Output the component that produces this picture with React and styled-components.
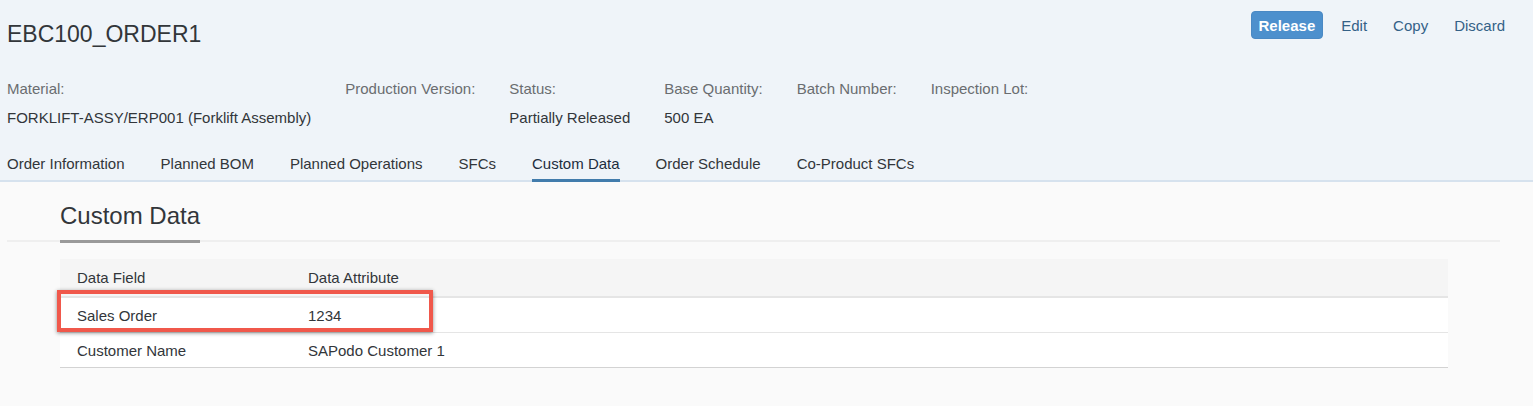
import React from "react";
import styled, { createGlobalStyle } from "styled-components";

const GlobalStyle = createGlobalStyle`
  body {
    margin: 0;
    background: #fafafa;
    font-family: "Liberation Sans", Arial, sans-serif;
    color: #32363a;
  }
`;

const attributes = [
  { label: "Material:", value: "FORKLIFT-ASSY/ERP001 (Forklift Assembly)" },
  { label: "Production Version:", value: "" },
  { label: "Status:", value: "Partially Released" },
  { label: "Base Quantity:", value: "500 EA" },
  { label: "Batch Number:", value: "" },
  { label: "Inspection Lot:", value: "" },
];

const tabs = [
  "Order Information",
  "Planned BOM",
  "Planned Operations",
  "SFCs",
  "Custom Data",
  "Order Schedule",
  "Co-Product SFCs",
];

const rows = [
  { field: "Sales Order", attribute: "1234" },
  { field: "Customer Name", attribute: "SAPodo Customer 1" },
];

export default function App() {
  return (
    <Page>
      <GlobalStyle />
      <Header>
        <TopRow>
          <Title>EBC100_ORDER1</Title>
          <Actions>
            <PrimaryButton>Release</PrimaryButton>
            <LinkButton>Edit</LinkButton>
            <LinkButton>Copy</LinkButton>
            <LinkButton>Discard</LinkButton>
          </Actions>
        </TopRow>
        <Attributes>
          {attributes.map((a) => (
            <Attribute key={a.label}>
              <Label>{a.label}</Label>
              <Value>{a.value || "\u00a0"}</Value>
            </Attribute>
          ))}
        </Attributes>
        <TabBar>
          {tabs.map((t) => (
            <Tab key={t} $active={t === "Custom Data"}>
              {t}
            </Tab>
          ))}
        </TabBar>
      </Header>
      <Content>
        <SectionHeader>
          <SectionTitle>Custom Data</SectionTitle>
        </SectionHeader>
        <Table>
          <HeadRow>
            <Cell>Data Field</Cell>
            <Cell>Data Attribute</Cell>
          </HeadRow>
          {rows.map((r, i) => (
            <Row key={r.field} $last={i === rows.length - 1}>
              <Cell>{r.field}</Cell>
              <Cell>{r.attribute}</Cell>
            </Row>
          ))}
          <Highlight />
        </Table>
      </Content>
    </Page>
  );
}

const Page = styled.div`
  width: 100%;
  min-height: 406px;
  background: #fafafa;
`;

const Header = styled.header`
  background: #eff4f9;
  padding: 11px 15px 0 7px;
  border-bottom: 2px solid #d6e2ee;
`;

const TopRow = styled.div`
  display: flex;
  justify-content: space-between;
  align-items: flex-start;
`;

const Title = styled.h1`
  margin: 9px 0 0;
  font-size: 23px;
  line-height: 28px;
  font-weight: 400;
  color: #32363a;
`;

const Actions = styled.div`
  display: flex;
  align-items: center;
`;

const PrimaryButton = styled.button`
  height: 28px;
  padding: 0 7px;
  margin-right: 5px;
  border: 1px solid #4a89c4;
  border-radius: 4px;
  background: #4d90cd;
  color: #fff;
  font-family: inherit;
  font-size: 15px;
  font-weight: 700;
`;

const LinkButton = styled.button`
  height: 28px;
  padding: 0 13px;
  border: none;
  background: transparent;
  color: #346187;
  font-family: inherit;
  font-size: 15px;
`;

const Attributes = styled.div`
  display: flex;
  gap: 34px;
  margin-top: 31px;
`;

const Attribute = styled.div`
  display: flex;
  flex-direction: column;
  gap: 9px;
`;

const Label = styled.div`
  font-size: 15px;
  line-height: 20px;
  color: #6a6d70;
`;

const Value = styled.div`
  font-size: 15px;
  line-height: 20px;
  color: #32363a;
`;

const TabBar = styled.nav`
  display: flex;
  gap: 36px;
  margin-top: 15px;
`;

const Tab = styled.div`
  padding: 11px 0 5px;
  font-size: 15px;
  line-height: 20px;
  color: ${(p) => (p.$active ? "#1d2d3e" : "#32363a")};
  border-bottom: 3px solid ${(p) => (p.$active ? "#427cac" : "transparent")};
  margin-bottom: -2px;
`;

const Content = styled.main`
  padding-bottom: 38px;
`;

const SectionHeader = styled.div`
  margin: 0 33px 0 7px;
  padding: 19px 0 0 53px;
  border-bottom: 2px solid #efefef;
  display: flex;
`;

const SectionTitle = styled.h2`
  margin: 0 0 -3px;
  padding-bottom: 9px;
  font-size: 24px;
  line-height: 30px;
  font-weight: 400;
  color: #32363a;
  border-bottom: 3px solid #9a9a9a;
`;

const Table = styled.div`
  position: relative;
  margin: 17px 85px 0 60px;
`;

const HeadRow = styled.div`
  display: grid;
  grid-template-columns: 231px 1fr;
  align-items: center;
  height: 37px;
  background: #f5f5f5;
  border-bottom: 2px solid #e5e5e5;
`;

const Row = styled.div`
  display: grid;
  grid-template-columns: 231px 1fr;
  align-items: center;
  height: 34px;
  background: #fff;
  border-bottom: 1px solid ${(p) => (p.$last ? "#d3d3d3" : "#e5e5e5")};
`;

const Cell = styled.div`
  padding: 0 17px;
  font-size: 15px;
  color: #32363a;
`;

const Highlight = styled.div`
  position: absolute;
  left: -3px;
  top: 31px;
  width: 376px;
  height: 42px;
  box-sizing: border-box;
  border: 4px solid #f0584b;
  box-shadow: 0 1px 4px rgba(0, 0, 0, 0.45);
  pointer-events: none;
`;
